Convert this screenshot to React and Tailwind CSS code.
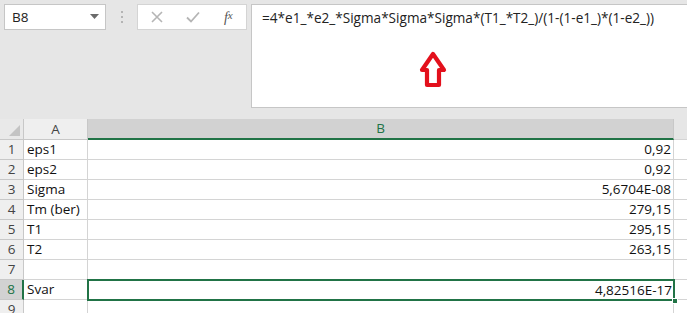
import React from "react";

const rows = [
  { n: 1, a: "eps1", b: "0,92" },
  { n: 2, a: "eps2", b: "0,92" },
  { n: 3, a: "Sigma", b: "5,6704E-08" },
  { n: 4, a: "Tm (ber)", b: "279,15" },
  { n: 5, a: "T1", b: "295,15" },
  { n: 6, a: "T2", b: "263,15" },
  { n: 7, a: "", b: "" },
  { n: 8, a: "Svar", b: "4,82516E-17" },
  { n: 9, a: "", b: "" },
];

function RedArrow() {
  return (
    <svg width="28" height="37" viewBox="0 0 28 37">
      <path
        d="M14 3 L25 19 L20 19 L20 34 L8 34 L8 19 L3 19 Z"
        fill="white"
        stroke="#e3101c"
        strokeWidth="4.2"
        strokeLinejoin="round"
      />
    </svg>
  );
}

function FormulaBar() {
  return (
    <div className="flex items-start bg-[#e6e6e6] pt-[4px] pl-[4px] h-[119px]">
      {/* Name box */}
      <div className="flex items-center justify-between w-[102px] h-[26px] bg-white border border-[#c6c6c6] pl-[7px] pr-[6px]">
        <span className="text-[13.5px] text-[#222]">B8</span>
        <svg width="9" height="6" viewBox="0 0 9 6">
          <path d="M0 0 L9 0 L4.5 5 Z" fill="#6b6b6b" />
        </svg>
      </div>

      {/* splitter dots */}
      <div className="flex flex-col gap-[3px] w-[31px] items-center h-[26px] justify-center">
        <span className="w-[2px] h-[2px] bg-[#b4b4b4]" />
        <span className="w-[2px] h-[2px] bg-[#b4b4b4]" />
        <span className="w-[2px] h-[2px] bg-[#b4b4b4]" />
      </div>

      {/* cancel / enter / fx */}
      <div className="flex items-center w-[110px] h-[26px] bg-white border border-[#d4d4d4]">
        <div className="w-[37px] flex justify-center pl-[2px]">
          <svg width="12" height="12" viewBox="0 0 12 12">
            <path d="M1 1 L11 11 M11 1 L1 11" stroke="#b5b5b5" strokeWidth="1.6" />
          </svg>
        </div>
        <div className="w-[37px] flex justify-center">
          <svg width="14" height="12" viewBox="0 0 14 12">
            <path d="M1 6.5 L5 10.5 L13 1.5" stroke="#b5b5b5" strokeWidth="1.8" fill="none" />
          </svg>
        </div>
        <div className="w-[36px] flex justify-center font-['Liberation_Serif',serif] italic text-[14px] text-[#555]">
          f<span className="text-[11px]">x</span>
        </div>
      </div>

      {/* formula box */}
      <div className="flex-1 ml-[4px] h-[104px] bg-white border-l border-t border-b border-[#c6c6c6] flex flex-col">
        <div className="pl-[10px] pt-[3px] text-[13.6px] text-[#222]">
          =4*e1_*e2_*Sigma*Sigma*Sigma*(T1_*T2_)/(1-(1-e1_)*(1-e2_))
        </div>
        <div className="flex pl-[167px] pt-[23px]">
          <RedArrow />
        </div>
      </div>
    </div>
  );
}

function Grid() {
  return (
    <div className="grid grid-cols-[24px_64px_586px_1fr] bg-white text-[13.5px] text-[#111]">
      {/* header row */}
      <div className="h-[21px] bg-[#e9e9e9] border-r border-b border-[#c8c8c8] relative">
        <svg className="absolute right-[3px] bottom-[3px]" width="11" height="11" viewBox="0 0 11 11">
          <path d="M11 0 L11 11 L0 11 Z" fill="#c4c4c4" />
        </svg>
      </div>
      <div className="h-[21px] bg-[#efefef] border-r border-b border-[#c8c8c8] flex items-center justify-center text-[#444]">
        A
      </div>
      <div className="h-[21px] bg-[#d2d2d2] border-r border-[#c8c8c8] border-b-2 border-b-[#217346] flex items-center justify-center text-[#217346]">
        B
      </div>
      <div className="h-[21px] bg-[#e6e6e6] border-b border-[#d4d4d4]" />

      {rows.map((r) => {
        const sel = r.n === 8;
        return (
          <React.Fragment key={r.n}>
            <div
              className={
                sel
                  ? "h-[20px] bg-[#d2d2d2] border-r-2 border-r-[#217346] border-b border-b-[#c8c8c8] flex items-center justify-center text-[#217346]"
                  : "h-[20px] bg-[#efefef] border-r border-b border-[#c8c8c8] flex items-center justify-center text-[#444]"
              }
            >
              {r.n}
            </div>
            <div className="h-[20px] border-r border-b border-[#d4d4d4] flex items-center pl-[3px]">
              {r.a}
            </div>
            <div
              className={
                sel
                  ? "h-[20px] relative flex items-center justify-end pr-[2px] outline-2 outline-[#217346] -outline-offset-1 z-10"
                  : "h-[20px] border-r border-b border-[#d4d4d4] flex items-center justify-end pr-[2px]"
              }
            >
              {r.b}
              {sel && (
                <span className="absolute right-[-4px] bottom-[-4px] w-[6px] h-[6px] bg-[#217346] border border-white" />
              )}
            </div>
            <div className="h-[20px] border-b border-[#d4d4d4]" />
          </React.Fragment>
        );
      })}
    </div>
  );
}

export default function App() {
  return (
    <div className="w-[687px] h-[313px] overflow-hidden font-['Open_Sans',sans-serif] bg-white">
      <FormulaBar />
      <Grid />
    </div>
  );
}
